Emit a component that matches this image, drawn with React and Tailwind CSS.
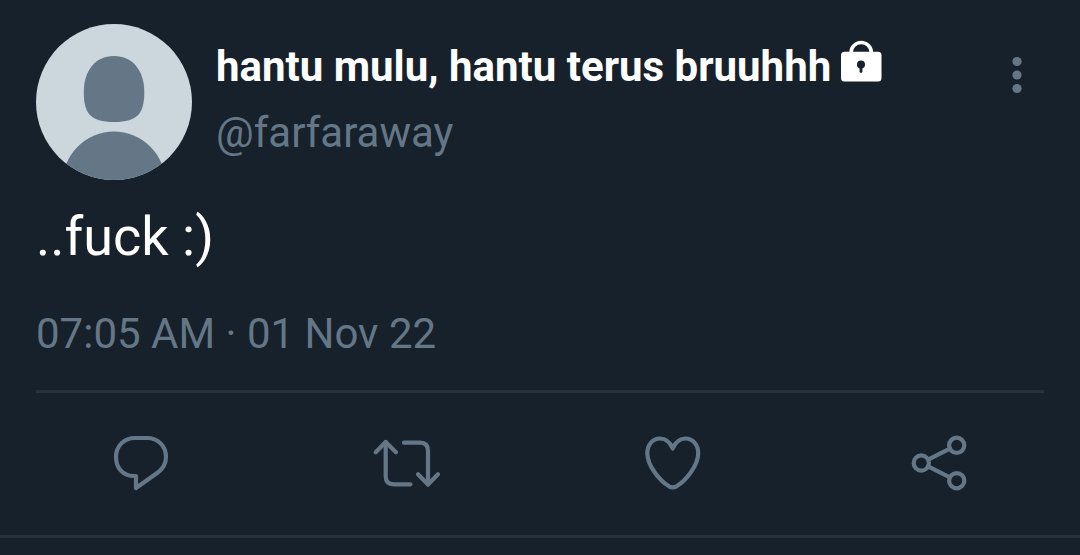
import React from "react";

function Avatar() {
  return (
    <svg
      viewBox="0 0 156 156"
      className="size-[156px] shrink-0 rounded-full bg-[#ccd6dd]"
      role="img"
      aria-label="Profile picture"
    >
      <path
        d="M78 32C97 32 108.300 47 108.300 68C108.300 89 102 98 78 98C54 98 47.800 89 47.800 68C47.800 47 59 32 78 32Z"
        fill="#657786"
      />
      <circle cx="78" cy="159" r="51.400" fill="#657786" />
    </svg>
  );
}

function Lock() {
  return (
    <svg viewBox="0 0 42 42" className="size-[42px] shrink-0" role="img" aria-label="Protected account">
      <path d="M10 14V12.700a10.200 10.200 0 0 1 20.400 0V14" fill="none" stroke="#fff" strokeWidth="3.600" />
      <rect x="0" y="11.700" width="40.500" height="29.800" rx="3.500" fill="#fff" />
      <circle cx="20" cy="24.500" r="4" fill="#17212b" />
      <path d="M20 25V31.500" stroke="#17212b" strokeWidth="2.800" strokeLinecap="round" />
    </svg>
  );
}

const actions = [
  {
    label: "Reply",
    art: (
      <path d="M34 14H46C57 14 65 22 65 33C65 40 61.500 45 56.500 48.800L35 64V52H33C22 52 15 44 15 33C15 22 23 14 34 14Z" />
    ),
  },
  {
    label: "Retweet",
    art: (
      <>
        <path d="M8.700 28.300L18.700 18L29 28.300" />
        <path d="M18.700 18V52.300Q18.700 60.300 26.700 60.300H43.500" />
        <path d="M37 18.700H53Q61 18.700 61 26.700V60.500" />
        <path d="M51 50.300L61 60.500L71 50.300" />
      </>
    ),
  },
  {
    label: "Like",
    art: (
      <path d="M39.700 24.500C37 18 33 14.500 27 14.500C19.500 14.500 14.300 21 14.300 29C14.300 42 27 57 36 62.300Q39.700 64.300 43.500 62.300C52.500 57 65.200 42 65.200 29C65.200 21 60 14.500 52.500 14.500C46.500 14.500 42.500 18 39.700 24.500Z" />
    ),
  },
  {
    label: "Share",
    art: (
      <>
        <circle cx="22.300" cy="39" r="7.600" />
        <circle cx="57.700" cy="21.300" r="7.600" />
        <circle cx="57.700" cy="56.700" r="7.600" />
        <path d="M29.100 35.600L50.900 24.700M29.100 42.400L50.900 53.300" />
      </>
    ),
  },
];

export default function App() {
  return (
    <main className="min-h-screen bg-[#17212b] font-['Roboto',sans-serif] text-white">
      <article className="border-b-3 border-[#27323c]">
        <div className="px-9 pt-6">
          <header className="flex items-start gap-6">
            <Avatar />
            <div className="flex min-w-0 flex-1 flex-col gap-[18px] pt-[19px] text-[42px] leading-[48px]">
              <h1 className="flex items-center gap-[10px] font-bold whitespace-nowrap">
                <span>hantu mulu, hantu terus bruuhhh</span>
                <span className="-mt-3">
                  <Lock />
                </span>
              </h1>
              <a href="#profile" className="self-start text-[#657786]">
                @farfaraway
              </a>
            </div>
            <button
              type="button"
              aria-label="More options"
              className="mt-6 flex size-[54px] shrink-0 items-center justify-center"
            >
              <svg viewBox="0 0 54 54" className="size-[54px]" fill="#657786" aria-hidden="true">
                <circle cx="27" cy="13.500" r="4.600" />
                <circle cx="27" cy="27" r="4.600" />
                <circle cx="27" cy="40.500" r="4.600" />
              </svg>
            </button>
          </header>
          <p className="mt-[25px] text-[54px] leading-[64px]">..fuck :)</p>
          <p className="mt-[41px] text-[42px] leading-[48px] text-[#657786]">
            <time dateTime="2022-11-01T07:05">07:05 AM · 01 Nov 22</time>
          </p>
          <hr className="mt-8 border-t-3 border-[#27323c]" />
        </div>
        <div className="grid grid-cols-4 px-2 py-[31px]">
          {actions.map(({ label, art }) => (
            <button key={label} type="button" aria-label={label} className="flex justify-center">
              <svg
                viewBox="0 0 80 80"
                className="size-20"
                fill="none"
                stroke="#657786"
                strokeWidth="4.200"
                strokeLinecap="round"
                strokeLinejoin="round"
                aria-hidden="true"
              >
                {art}
              </svg>
            </button>
          ))}
        </div>
      </article>
    </main>
  );
}
